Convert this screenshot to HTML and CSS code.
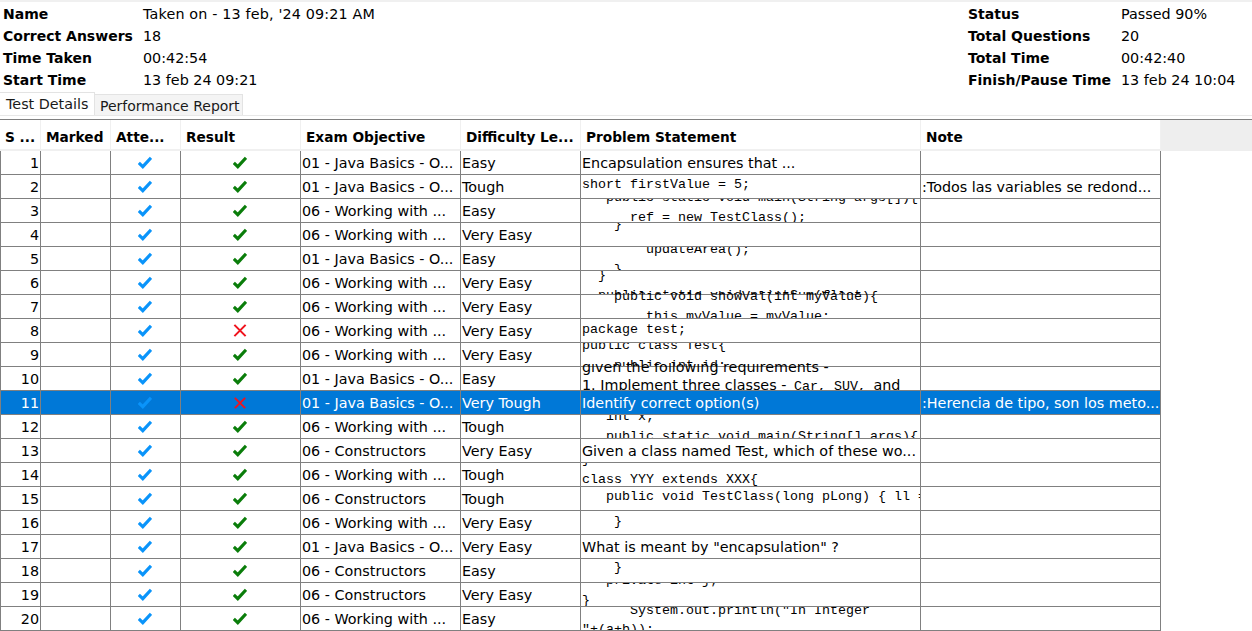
FILE: index.html
```html
<!DOCTYPE html>
<html lang="en">
<head>
<meta charset="utf-8">
<title>Test Details</title>
<link rel="stylesheet" href="styles.css">
</head>
<body>
<svg class="defs" width="0" height="0" aria-hidden="true">
  <symbol id="att" viewBox="0 0 14 12.5"><path d="M0.8 6.6 L4.8 10.4 L13 1.6" fill="none" stroke="#0a94fa" stroke-width="3.2"/></symbol>
  <symbol id="ok" viewBox="0 0 14 12.5"><path d="M0.8 6.6 L4.8 10.4 L13 1.6" fill="none" stroke="#0a7d0a" stroke-width="3.2"/></symbol>
  <symbol id="bad" viewBox="0 0 12 12"><path d="M0.8 0.8 L11.2 11.2 M11.2 0.8 L0.8 11.2" fill="none" stroke="#f0141e" stroke-width="1.9"/></symbol>
</svg>
<header class="summary">
  <dl class="info">
    <dt>Name</dt><dd class="wide">Taken on - 13 feb, '24 09:21 AM</dd>
    <dt>Correct Answers</dt><dd>18</dd>
    <dt>Time Taken</dt><dd>00:42:54</dd>
    <dt>Start Time</dt><dd>13 feb 24 09:21</dd>
  </dl>
  <dl class="info info-right">
    <dt>Status</dt><dd>Passed 90%</dd>
    <dt>Total Questions</dt><dd>20</dd>
    <dt>Total Time</dt><dd>00:42:40</dd>
    <dt>Finish/Pause Time</dt><dd>13 feb 24 10:04</dd>
  </dl>
</header>
<nav class="tabs">
  <div class="tab tab-active">Test Details</div>
  <div class="tab">Performance Report</div>
</nav>
<table class="grid">
  <colgroup>
    <col class="c1"><col class="c2"><col class="c3"><col class="c4"><col class="c5"><col class="c6"><col class="c7"><col class="c8"><col>
  </colgroup>
  <thead>
    <tr><th>S ...</th><th>Marked</th><th>Atte...</th><th>Result</th><th>Exam Objective</th><th>Difficulty Le...</th><th>Problem Statement</th><th>Note</th><th class="filler"></th></tr>
  </thead>
  <tbody>
    <tr><td class="num">1</td><td></td><td class="ic"><svg class="chk"><use href="#att"/></svg></td><td class="ic"><svg class="chk"><use href="#ok"/></svg></td><td>01 - Java Basics - O...</td><td>Easy</td><td>Encapsulation ensures that ...</td><td></td></tr>
    <tr><td class="num">2</td><td></td><td class="ic"><svg class="chk"><use href="#att"/></svg></td><td class="ic"><svg class="chk"><use href="#ok"/></svg></td><td>01 - Java Basics - O...</td><td>Tough</td><td><div class="code o-m1">short firstValue = 5;</div></td><td>:Todos las variables se redond...</td></tr>
    <tr><td class="num">3</td><td></td><td class="ic"><svg class="chk"><use href="#att"/></svg></td><td class="ic"><svg class="chk"><use href="#ok"/></svg></td><td>06 - Working with ...</td><td>Easy</td><td><div class="code o-m12">   public static void main(String args[]){
      ref = new TestClass();</div></td><td></td></tr>
    <tr><td class="num">4</td><td></td><td class="ic"><svg class="chk"><use href="#att"/></svg></td><td class="ic"><svg class="chk"><use href="#ok"/></svg></td><td>06 - Working with ...</td><td>Very Easy</td><td><div class="code o-m9">    }</div></td><td></td></tr>
    <tr><td class="num">5</td><td></td><td class="ic"><svg class="chk"><use href="#att"/></svg></td><td class="ic"><svg class="chk"><use href="#ok"/></svg></td><td>01 - Java Basics - O...</td><td>Easy</td><td><div class="code o-m8">        updateArea();
    }</div></td><td></td></tr>
    <tr><td class="num">6</td><td></td><td class="ic"><svg class="chk"><use href="#att"/></svg></td><td class="ic"><svg class="chk"><use href="#ok"/></svg></td><td>06 - Working with ...</td><td>Very Easy</td><td><div class="code o-m6">  }
  public static void printSum(float</div></td><td></td></tr>
    <tr><td class="num">7</td><td></td><td class="ic"><svg class="chk"><use href="#att"/></svg></td><td class="ic"><svg class="chk"><use href="#ok"/></svg></td><td>06 - Working with ...</td><td>Very Easy</td><td><div class="code over o-m9">    public void showVal(int myValue){
        this.myValue = myValue;</div></td><td></td></tr>
    <tr><td class="num">8</td><td></td><td class="ic"><svg class="chk"><use href="#att"/></svg></td><td class="ic"><svg class="chk"><use href="#bad"/></svg></td><td>06 - Working with ...</td><td>Very Easy</td><td><div class="code">package test;</div></td><td></td></tr>
    <tr><td class="num">9</td><td></td><td class="ic"><svg class="chk"><use href="#att"/></svg></td><td class="ic"><svg class="chk"><use href="#ok"/></svg></td><td>06 - Working with ...</td><td>Very Easy</td><td><div class="code o-m8">public class Test{
    public int id;</div></td><td></td></tr>
    <tr><td class="num">10</td><td></td><td class="ic"><svg class="chk"><use href="#att"/></svg></td><td class="ic"><svg class="chk"><use href="#ok"/></svg></td><td>01 - Java Basics - O...</td><td>Easy</td><td><div class="prose over">given the following requirements -<br>1. Implement three classes - <span class="mono">Car, SUV,</span> and</div></td><td></td></tr>
    <tr class="sel"><td class="num">11</td><td></td><td class="ic"><svg class="chk"><use href="#att"/></svg></td><td class="ic"><svg class="chk x"><use href="#bad"/></svg></td><td>01 - Java Basics - O...</td><td>Very Tough</td><td>Identify correct option(s)</td><td>:Herencia de tipo, son los meto...</td></tr>
    <tr><td class="num">12</td><td></td><td class="ic"><svg class="chk"><use href="#att"/></svg></td><td class="ic"><svg class="chk"><use href="#ok"/></svg></td><td>06 - Working with ...</td><td>Tough</td><td><div class="code o-m9">   int x;
   public static void main(String[] args){</div></td><td></td></tr>
    <tr><td class="num">13</td><td></td><td class="ic"><svg class="chk"><use href="#att"/></svg></td><td class="ic"><svg class="chk"><use href="#ok"/></svg></td><td>06 - Constructors</td><td>Very Easy</td><td>Given a class named Test, which of these wo...</td><td></td></tr>
    <tr><td class="num">14</td><td></td><td class="ic"><svg class="chk"><use href="#att"/></svg></td><td class="ic"><svg class="chk"><use href="#ok"/></svg></td><td>06 - Working with ...</td><td>Tough</td><td><div class="code o-m14">}
class YYY extends XXX{</div></td><td></td></tr>
    <tr><td class="num">15</td><td></td><td class="ic"><svg class="chk"><use href="#att"/></svg></td><td class="ic"><svg class="chk"><use href="#ok"/></svg></td><td>06 - Constructors</td><td>Tough</td><td><div class="code o-m1">   public void TestClass(long pLong) { ll = pLong; }</div></td><td></td></tr>
    <tr><td class="num">16</td><td></td><td class="ic"><svg class="chk"><use href="#att"/></svg></td><td class="ic"><svg class="chk"><use href="#ok"/></svg></td><td>06 - Working with ...</td><td>Very Easy</td><td><div class="code">    }</div></td><td></td></tr>
    <tr><td class="num">17</td><td></td><td class="ic"><svg class="chk"><use href="#att"/></svg></td><td class="ic"><svg class="chk"><use href="#ok"/></svg></td><td>01 - Java Basics - O...</td><td>Very Easy</td><td>What is meant by "encapsulation" ?</td><td></td></tr>
    <tr><td class="num">18</td><td></td><td class="ic"><svg class="chk"><use href="#att"/></svg></td><td class="ic"><svg class="chk"><use href="#ok"/></svg></td><td>06 - Constructors</td><td>Easy</td><td><div class="code o-m2">    }</div></td><td></td></tr>
    <tr><td class="num">19</td><td></td><td class="ic"><svg class="chk"><use href="#att"/></svg></td><td class="ic"><svg class="chk"><use href="#ok"/></svg></td><td>06 - Constructors</td><td>Very Easy</td><td><div class="code o-m13">   private int j;
}</div></td><td></td></tr>
    <tr><td class="num">20</td><td></td><td class="ic"><svg class="chk"><use href="#att"/></svg></td><td class="ic"><svg class="chk"><use href="#ok"/></svg></td><td>06 - Working with ...</td><td>Easy</td><td><div class="code tight o-m7">      System.out.println("In Integer
"+(a+b));</div></td><td></td></tr>
  </tbody>
</table>
</body>
</html>
```
FILE: styles.css
```css
html, body { margin: 0; padding: 0; height: 631px; overflow: hidden; background: #fff; }
body { font-family: "DejaVu Sans", sans-serif; font-size: 14.33px; color: #000; border-top: 2px solid #f0f0f0; box-sizing: border-box; }
.defs { display: block; height: 0; }
.summary { display: flex; justify-content: space-between; height: 88px; padding: 1px 0 0 3px; box-sizing: border-box; }
.info { display: grid; grid-template-columns: 140px auto; grid-auto-rows: 22px; margin: 0; align-items: center; }
.info dt { font-weight: bold; font-size: 14px; white-space: nowrap; }
.info dd { margin: 0; white-space: nowrap; }
.info dd.wide { letter-spacing: 0.16px; }
.info-right { grid-template-columns: 153px 131px; }
.tabs { display: flex; align-items: flex-end; height: 26px; box-sizing: border-box; border-bottom: 1px solid #e8e8e8; }
.tab { height: 21px; line-height: 23px; width: 148px; box-sizing: border-box; padding: 0 0 0 5px; font-size: 14px; border: 1px solid #e3e3e3; border-bottom: 0; border-left: 0; background: #f4f4f4; color: #1a1a1a; }
.tab-active { height: 23px; line-height: 22px; width: 95px; background: #fff; padding: 0 0 0 6px; font-size: 14.33px; }
.grid { table-layout: fixed; border-collapse: separate; border-spacing: 0; width: 1252px; margin-top: 3px; border-top: 1px solid #808080; }
.c1 { width: 41px; } .c2 { width: 70px; } .c3 { width: 70px; } .c4 { width: 120px; }
.c5 { width: 160px; } .c6 { width: 120px; } .c7 { width: 340px; } .c8 { width: 240px; }
.grid th { box-sizing: border-box; height: 31px; padding: 5px 0 0 5px; text-align: left; font-weight: bold; font-size: 13.7px; white-space: nowrap; overflow: hidden; border-right: 1px solid #f0f0f0; border-bottom: 2px solid #f0f0f0; background: #fff; }
.grid th.filler { background: #eeeeee; border: 0; padding: 0; }
.grid td { box-sizing: border-box; height: 24px; padding: 0 0 0 1px; white-space: nowrap; overflow: hidden; border-right: 1px solid #808080; border-bottom: 1px solid #808080; vertical-align: middle; }
.grid td:first-child { border-left: 1px solid #808080; }
.grid td:has(> .code), .grid td:has(> .prose) { vertical-align: top; }
.grid td:has(> .over) { overflow: visible; }
.grid td.num { text-align: right; padding-right: 1px; }
.grid td.ic { text-align: center; padding: 0 2px 0 0; }
.chk { width: 14px; height: 13px; display: block; margin: 0 auto; }
.x { width: 12px; height: 12px; }
.sel td { background: #0078d7; color: #fff; }
.code { height: 20px; padding-top: 1px; font-family: "Liberation Mono", monospace; font-size: 13.33px; line-height: 20px; white-space: pre; }
.code.over { clip-path: inset(5px 0 -11px 0); position: relative; }
.code.tight { line-height: 19px; }
.prose { height: 20px; line-height: 18px; margin-top: -9px; position: relative; clip-path: inset(5px 0 -12px 0); }
.mono { font-family: "Liberation Mono", monospace; font-size: 13.33px; margin: 0 3px; }
.o-m1 { margin-top: -1px; }
.o-m2 { margin-top: -2px; }
.o-m6 { margin-top: -6px; }
.o-m7 { margin-top: -7px; }
.o-m8 { margin-top: -8px; }
.o-m9 { margin-top: -9px; }
.o-m12 { margin-top: -12px; }
.o-m13 { margin-top: -13px; }
.o-m14 { margin-top: -14px; }
```
